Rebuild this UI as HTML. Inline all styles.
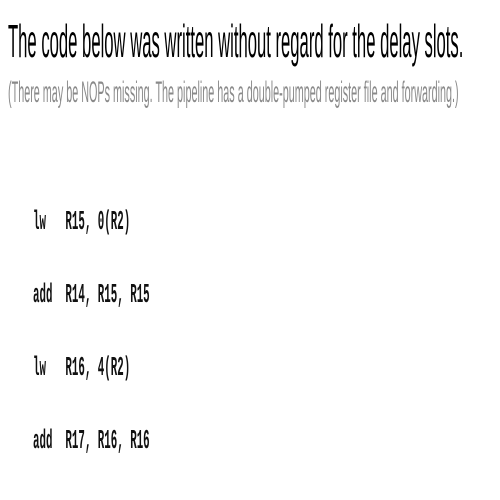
<!DOCTYPE html>
<html><head><style>
html,body{margin:0;padding:0;background:#fff;width:500px;height:500px;overflow:hidden}
.t{position:absolute;left:8px;white-space:nowrap;transform-origin:0 0;font-family:"Liberation Sans",sans-serif}
#h{top:14px;font-size:46px;color:#000;transform:scaleX(0.362)}
#s{top:76px;font-size:30px;color:#8a8a8a;transform:scaleX(0.36)}
.c{position:absolute;left:33px;white-space:pre;transform-origin:0 0;font-family:"Liberation Mono",monospace;font-size:27px;color:#111;font-weight:bold;transform:scaleX(0.4)}
</style></head><body>
<div class="t" id="h">The code below was written without regard for the delay slots.</div>
<div class="t" id="s">(There may be NOPs missing. The pipeline has a double-pumped register file and forwarding.)</div>
<div class="c" style="top:208px">lw   R15, 0(R2)</div>
<div class="c" style="top:281px">add  R14, R15, R15</div>
<div class="c" style="top:354px">lw   R16, 4(R2)</div>
<div class="c" style="top:427px">add  R17, R16, R16</div>
</body></html>
